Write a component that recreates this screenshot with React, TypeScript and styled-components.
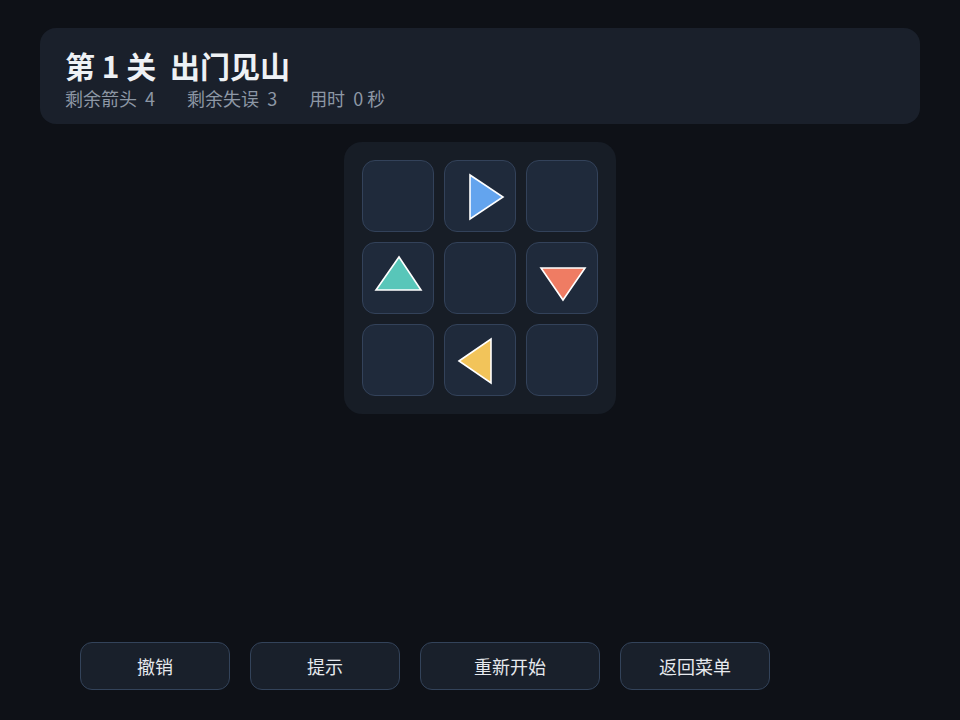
import React from "react";
import styled, { createGlobalStyle } from "styled-components";

const Global = createGlobalStyle`
  html, body { margin: 0; padding: 0; background: #0e1117; }
  body { font-family: "Noto Sans CJK SC", "Noto Sans", sans-serif; color: #e6e9ee; }
  * { box-sizing: border-box; }
`;

const Page = styled.div`
  min-height: 100vh;
  display: flex;
  flex-direction: column;
  padding: 28px 40px 30px;
`;

const Header = styled.header`
  height: 96px;
  background: #1a202b;
  border-radius: 16px;
  padding: 18px 25px 0;
`;

const Title = styled.h1`
  margin: 0;
  font-size: 30px;
  line-height: 38px;
  font-weight: 700;
  color: #eef1f5;
  white-space: pre;
`;

const Stats = styled.div`
  display: flex;
  gap: 32px;
  margin-top: 1px;
  font-size: 18px;
  line-height: 26px;
  color: #8d97a5;
`;

const Stat = styled.span`
  white-space: pre;
`;

const Board = styled.div`
  align-self: center;
  margin-top: 18px;
  width: 272px;
  padding: 18px;
  background: #171d26;
  border-radius: 18px;
  display: grid;
  grid-template-columns: repeat(3, 72px);
  grid-auto-rows: 72px;
  gap: 10px;
`;

const Cell = styled.div`
  background: #1f2a3b;
  border: 1px solid #33425a;
  border-radius: 13px;
  position: relative;
  overflow: hidden;
`;

const ArrowSvg = styled.svg`
  position: absolute;
  left: -1px;
  top: -1px;
  width: 72px;
  height: 72px;
`;

const Buttons = styled.div`
  margin-top: auto;
  padding-left: 40px;
  display: flex;
  gap: 20px;
`;

const Button = styled.button<{ $w: number }>`
  width: ${(p) => p.$w}px;
  height: 48px;
  background: #19202b;
  border: 1px solid #33435a;
  border-radius: 12px;
  color: #e6e9ee;
  font-family: "Noto Sans CJK SC", "Noto Sans", sans-serif;
  font-size: 18px;
  padding: 0;
`;

type Arrow = { points: string; fill: string } | null;

const cells: Arrow[] = [
  null,
  { points: "26,15 59,37 26,59", fill: "#63a4ee" },
  null,
  { points: "14,48 37,15 59,48", fill: "#58c6b9" },
  null,
  { points: "15,26 59,26 37,58", fill: "#ef7c63" },
  null,
  { points: "15,37 47,15 47,59", fill: "#f2c45a" },
  null,
];

export default function App() {
  return (
    <>
      <Global />
      <Page>
        <Header>
          <Title>{"第 1 关  出门见山"}</Title>
          <Stats>
            <Stat>剩余箭头  4</Stat>
            <Stat>剩余失误  3</Stat>
            <Stat>用时  0 秒</Stat>
          </Stats>
        </Header>
        <Board>
          {cells.map((a, i) => (
            <Cell key={i}>
              {a && (
                <ArrowSvg viewBox="0 0 72 72">
                  <polygon
                    points={a.points}
                    fill={a.fill}
                    stroke="#ffffff"
                    strokeWidth={1.6}
                    strokeLinejoin="miter"
                  />
                </ArrowSvg>
              )}
            </Cell>
          ))}
        </Board>
        <Buttons>
          <Button $w={150}>撤销</Button>
          <Button $w={150}>提示</Button>
          <Button $w={180}>重新开始</Button>
          <Button $w={150}>返回菜单</Button>
        </Buttons>
      </Page>
    </>
  );
}
